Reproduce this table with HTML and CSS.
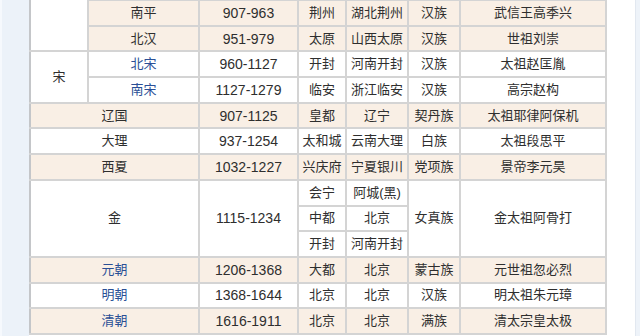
FILE: index.html
```html
<!DOCTYPE html>
<html lang="zh">
<head>
<meta charset="utf-8">
<title>朝代表</title>
<link rel="stylesheet" href="styles.css">
</head>
<body>
<div class="page">
  <div class="side-left"></div>
  <table class="dyn">
    <colgroup>
      <col class="c0"><col class="c1"><col class="c2"><col class="c3"><col class="c4"><col class="c5"><col class="c6">
    </colgroup>
    <tbody>
      <tr class="alt">
        <td class="cont" rowspan="2"></td>
        <td>南平</td><td class="yr">907-963</td><td>荆州</td><td>湖北荆州</td><td>汉族</td><td>武信王高季兴</td>
      </tr>
      <tr class="alt">
        <td>北汉</td><td class="yr">951-979</td><td>太原</td><td>山西太原</td><td>汉族</td><td>世祖刘崇</td>
      </tr>
      <tr>
        <td rowspan="2">宋</td>
        <td><a class="lk">北宋</a></td><td class="yr">960-1127</td><td>开封</td><td>河南开封</td><td>汉族</td><td>太祖赵匡胤</td>
      </tr>
      <tr>
        <td><a class="lk">南宋</a></td><td class="yr">1127-1279</td><td>临安</td><td>浙江临安</td><td>汉族</td><td>高宗赵构</td>
      </tr>
      <tr class="alt">
        <td colspan="2">辽国</td><td class="yr">907-1125</td><td>皇都</td><td>辽宁</td><td>契丹族</td><td>太祖耶律阿保机</td>
      </tr>
      <tr>
        <td colspan="2">大理</td><td class="yr">937-1254</td><td>太和城</td><td>云南大理</td><td>白族</td><td>太祖段思平</td>
      </tr>
      <tr class="alt">
        <td colspan="2">西夏</td><td class="yr">1032-1227</td><td>兴庆府</td><td>宁夏银川</td><td>党项族</td><td>景帝李元昊</td>
      </tr>
      <tr>
        <td colspan="2" rowspan="3">金</td><td class="yr" rowspan="3">1115-1234</td><td>会宁</td><td>阿城(黑)</td><td rowspan="3">女真族</td><td rowspan="3">金太祖阿骨打</td>
      </tr>
      <tr>
        <td>中都</td><td>北京</td>
      </tr>
      <tr>
        <td>开封</td><td>河南开封</td>
      </tr>
      <tr class="alt">
        <td colspan="2"><a class="lk">元朝</a></td><td class="yr">1206-1368</td><td>大都</td><td>北京</td><td>蒙古族</td><td>元世祖忽必烈</td>
      </tr>
      <tr>
        <td colspan="2"><a class="lk">明朝</a></td><td class="yr">1368-1644</td><td>北京</td><td>北京</td><td>汉族</td><td>明太祖朱元璋</td>
      </tr>
      <tr class="alt">
        <td colspan="2"><a class="lk">清朝</a></td><td class="yr">1616-1911</td><td>北京</td><td>北京</td><td>满族</td><td>清太宗皇太极</td>
      </tr>
    </tbody>
  </table>
  <div class="gap"></div>
  <div class="side-right"></div>
</div>
</body>
</html>
```

FILE: styles.css
```css
html, body {
  margin: 0;
  padding: 0;
  background: #ffffff;
}

.page {
  display: flex;
  align-items: flex-start;
  width: 640px;
  height: 336px;
  overflow: hidden;
}

.side-left {
  flex: 0 0 27px;
  align-self: stretch;
  background: #ecf2f9;
  border-left: 2px solid #f6f9fd;
}

.gap {
  flex: 0 0 28px;
  align-self: stretch;
  background: #ffffff;
}

.side-right {
  flex: 1 1 auto;
  align-self: stretch;
  background: #eef3f9;
  border-left: 1px solid #e2e8f0;
}

.dyn {
  flex: 0 0 578px;
  width: 578px;
  margin-top: -1px;
  table-layout: fixed;
  border-collapse: collapse;
  font-family: "Liberation Sans", "Noto Sans CJK SC", sans-serif;
  font-size: 13px;
  color: #2e2e2e;
  border-left: 2px solid #c4c6c9;
}

.c0 { width: 58px; }
.c1 { width: 111px; }
.c2 { width: 99px; }
.c3 { width: 48px; }
.c4 { width: 62px; }
.c5 { width: 52px; }
.c6 { width: 146px; }

.dyn tr {
  height: 25.7px;
}

.dyn td {
  border: 2px solid #d4d4d4;
  padding: 0;
  text-align: center;
  vertical-align: middle;
  white-space: nowrap;
  background: #ffffff;
  line-height: 16px;
}

.dyn tr.alt td {
  background: #f9efe5;
}

.dyn tr.alt td.cont {
  background: #ffffff;
  border-top: none;
}

.dyn td:first-child {
  border-left: 2px solid #c4c6c9;
}

.dyn td.yr {
  font-size: 14px;
}

.lk {
  color: #2a4f96;
  text-decoration: none;
}
```
